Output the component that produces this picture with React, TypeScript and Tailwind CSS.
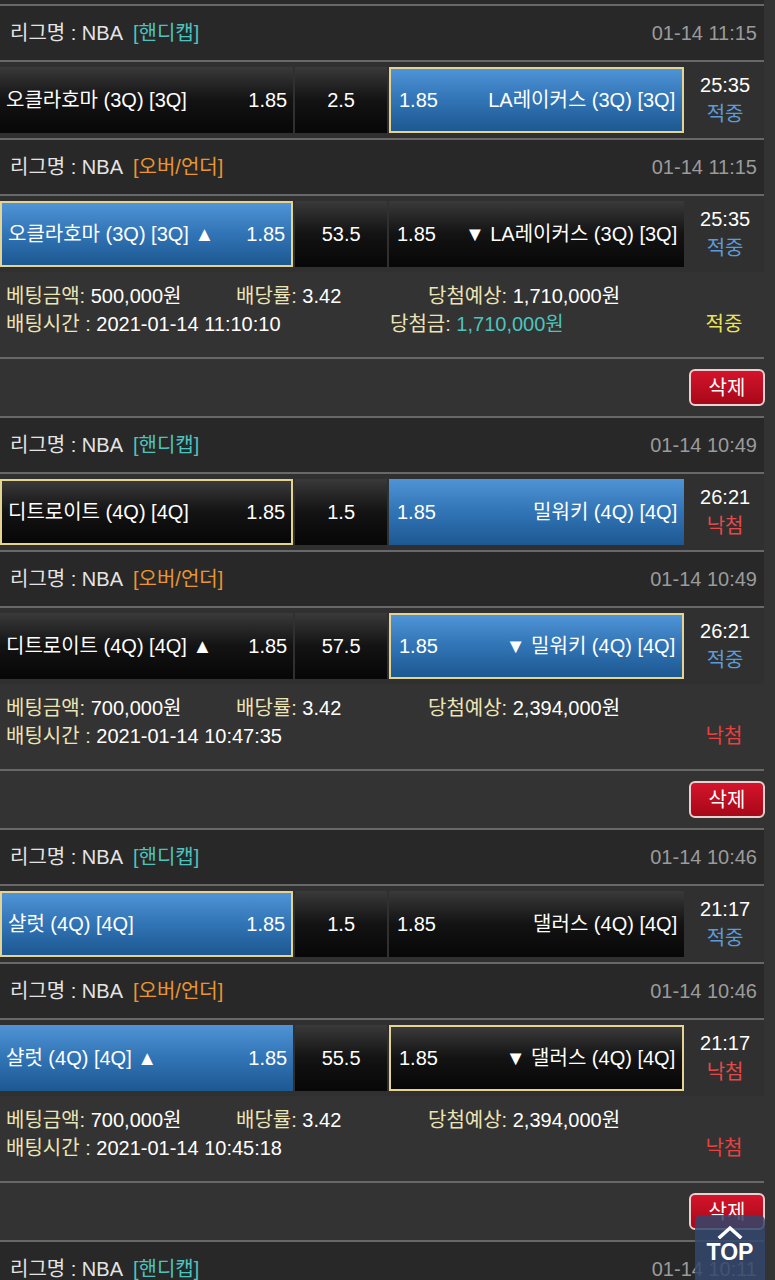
type Side = "home" | "away";

interface Game {
  date: string;
  type: "handicap" | "ou";
  home: string;
  homeOdds: string;
  line: string;
  awayOdds: string;
  away: string;
  time: string;
  result: "적중" | "낙첨";
  pick: Side;
  win: Side;
}

interface Slip {
  games: Game[];
  amount: string;
  rate: string;
  expect: string;
  betTime: string;
  prize?: string;
  status: "적중" | "낙첨";
}

const slips: Slip[] = [
  {
    games: [
      {
        date: "01-14 11:15",
        type: "handicap",
        home: "오클라호마 (3Q) [3Q]",
        homeOdds: "1.85",
        line: "2.5",
        awayOdds: "1.85",
        away: "LA레이커스 (3Q) [3Q]",
        time: "25:35",
        result: "적중",
        pick: "away",
        win: "away",
      },
      {
        date: "01-14 11:15",
        type: "ou",
        home: "오클라호마 (3Q) [3Q] ▲",
        homeOdds: "1.85",
        line: "53.5",
        awayOdds: "1.85",
        away: "▼ LA레이커스 (3Q) [3Q]",
        time: "25:35",
        result: "적중",
        pick: "home",
        win: "home",
      },
    ],
    amount: "500,000원",
    rate: "3.42",
    expect: "1,710,000원",
    betTime: "2021-01-14 11:10:10",
    prize: "1,710,000원",
    status: "적중",
  },
  {
    games: [
      {
        date: "01-14 10:49",
        type: "handicap",
        home: "디트로이트 (4Q) [4Q]",
        homeOdds: "1.85",
        line: "1.5",
        awayOdds: "1.85",
        away: "밀워키 (4Q) [4Q]",
        time: "26:21",
        result: "낙첨",
        pick: "home",
        win: "away",
      },
      {
        date: "01-14 10:49",
        type: "ou",
        home: "디트로이트 (4Q) [4Q] ▲",
        homeOdds: "1.85",
        line: "57.5",
        awayOdds: "1.85",
        away: "▼ 밀워키 (4Q) [4Q]",
        time: "26:21",
        result: "적중",
        pick: "away",
        win: "away",
      },
    ],
    amount: "700,000원",
    rate: "3.42",
    expect: "2,394,000원",
    betTime: "2021-01-14 10:47:35",
    status: "낙첨",
  },
  {
    games: [
      {
        date: "01-14 10:46",
        type: "handicap",
        home: "샬럿 (4Q) [4Q]",
        homeOdds: "1.85",
        line: "1.5",
        awayOdds: "1.85",
        away: "댈러스 (4Q) [4Q]",
        time: "21:17",
        result: "적중",
        pick: "home",
        win: "home",
      },
      {
        date: "01-14 10:46",
        type: "ou",
        home: "샬럿 (4Q) [4Q] ▲",
        homeOdds: "1.85",
        line: "55.5",
        awayOdds: "1.85",
        away: "▼ 댈러스 (4Q) [4Q]",
        time: "21:17",
        result: "낙첨",
        pick: "away",
        win: "home",
      },
    ],
    amount: "700,000원",
    rate: "3.42",
    expect: "2,394,000원",
    betTime: "2021-01-14 10:45:18",
    status: "낙첨",
  },
];

const darkCell = "bg-linear-to-b from-[#3a3a3a] via-[#131313] to-[#070707]";
const blueCell = "bg-linear-to-b from-[#4f94d6] via-[#3174b6] to-[#1d5891]";
const picked = "border-2 border-[#e4d391]";

function LeagueHeader({ type, date }: { type: "handicap" | "ou"; date: string }) {
  return (
    <div className="flex h-[56px] items-center justify-between border-t-2 border-[#686868] bg-[#282828] pl-[10px] pr-[7px] text-[20px]">
      <div className="flex items-center gap-[10px]">
        <span className="text-[#e4e4e4]">리그명 : NBA</span>
        {type === "handicap" ? (
          <span className="text-[#4cc4bd]">[핸디캡]</span>
        ) : (
          <span className="text-[#eb952f]">[오버/언더]</span>
        )}
      </div>
      <span className="text-[#9b9b9b]">{date}</span>
    </div>
  );
}

function GameRow({ game }: { game: Game }) {
  const homeCls = `${game.win === "home" ? blueCell : darkCell} ${game.pick === "home" ? picked : ""}`;
  const awayCls = `${game.win === "away" ? blueCell : darkCell} ${game.pick === "away" ? picked : ""}`;
  return (
    <div className="flex h-[78px] items-center gap-[2px] border-t-2 border-[#686868] bg-[#303030] text-[20px] text-white">
      <div className={`flex h-[66px] w-[294px] items-center justify-between pl-[6px] pr-[6px] ${homeCls}`}>
        <span>{game.home}</span>
        <span>{game.homeOdds}</span>
      </div>
      <div className={`flex h-[66px] w-[92px] items-center justify-center ${darkCell}`}>{game.line}</div>
      <div className={`flex h-[66px] w-[296px] items-center justify-between pl-[8px] pr-[7px] ${awayCls}`}>
        <span>{game.awayOdds}</span>
        <span>{game.away}</span>
      </div>
      <div className="flex w-[78px] flex-col items-center leading-[29px]">
        <span>{game.time}</span>
        <span className={game.result === "적중" ? "text-[#5d9bd6]" : "text-[#e44a4a]"}>{game.result}</span>
      </div>
    </div>
  );
}

function SlipBlock({ slip }: { slip: Slip }) {
  const label = "text-[#ece4b4]";
  return (
    <div>
      {slip.games.map((g, i) => (
        <div key={i}>
          <LeagueHeader type={g.type} date={g.date} />
          <GameRow game={g} />
        </div>
      ))}
      {/* bet summary */}
      <div className="h-[85px] pt-[10px] text-[20px] leading-[28px] text-white">
        <div className="flex">
          <span className="w-[236px] pl-[6px]">
            <span className={label}>베팅금액:</span> {slip.amount}
          </span>
          <span className="w-[192px]">
            <span className={label}>배당률:</span> {slip.rate}
          </span>
          <span>
            <span className={label}>당첨예상:</span> {slip.expect}
          </span>
        </div>
        <div className="flex">
          <span className="w-[390px] pl-[6px]">
            <span className={label}>배팅시간 :</span> {slip.betTime}
          </span>
          <span className="w-[314px]">
            {slip.prize && (
              <>
                <span className={label}>당첨금:</span> <span className="text-[#4cc4bd]">{slip.prize}</span>
              </>
            )}
          </span>
          <span className={`w-[40px] text-center ${slip.status === "적중" ? "text-[#e8e45c]" : "text-[#e8413f]"}`}>
            {slip.status}
          </span>
        </div>
      </div>
      <div className="flex h-[59px] items-center justify-end border-t-2 border-[#686868]">
        <button className="-mr-[1px] h-[37px] w-[76px] rounded-[6px] border-2 border-[#ead0d0] bg-linear-to-b from-[#d4142b] to-[#a70818] text-[20px] text-white">
          삭제
        </button>
      </div>
    </div>
  );
}

export default function App() {
  return (
    <div className="relative h-[1280px] w-[775px] overflow-hidden bg-[#333333] font-['Liberation_Sans','Noto_Sans_CJK_KR',sans-serif]">
      <div className="w-[764px]">
        <div className="h-[4px] bg-[#2a2a2a]" />
        {slips.map((s, i) => (
          <SlipBlock key={i} slip={s} />
        ))}
        <LeagueHeader type="handicap" date="01-14 10:11" />
      </div>

      {/* TOP button */}
      <div className="absolute bottom-0 right-[10px] flex h-[65px] w-[70px] flex-col items-center rounded-t-[6px] bg-[#34466c]/85 pt-[10px]">
        <svg width="28" height="14" viewBox="0 0 28 14" fill="none">
          <polyline points="4,12 14,3 24,12" stroke="white" strokeWidth="3.5" strokeLinecap="square" />
        </svg>
        <span className="text-[23px] font-bold leading-[26px] text-white">TOP</span>
      </div>
    </div>
  );
}
